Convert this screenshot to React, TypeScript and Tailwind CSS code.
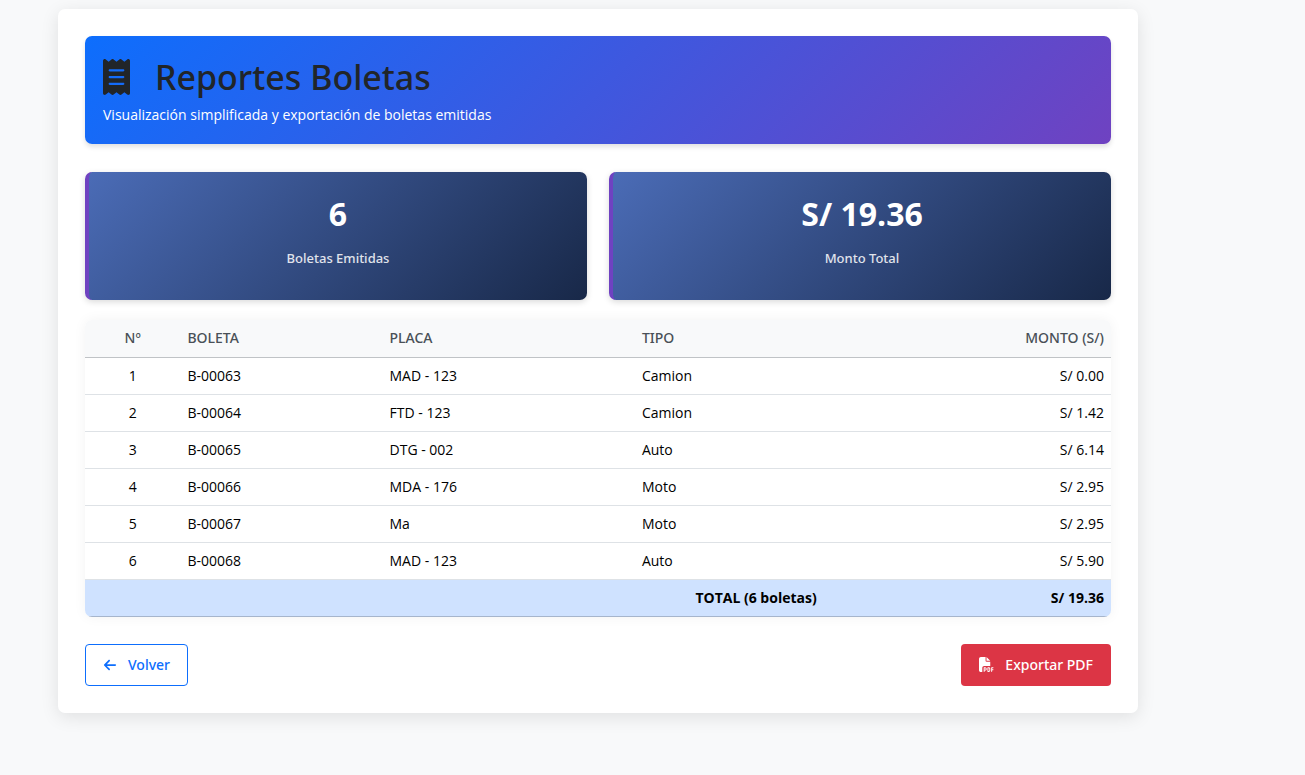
import { FaArrowLeft, FaFilePdf, FaReceipt } from "react-icons/fa6";

type Boleta = { codigo: string; placa: string; tipo: string; monto: number };

const boletas: Boleta[] = [
  { codigo: "B-00063", placa: "MAD - 123", tipo: "Camion", monto: 0 },
  { codigo: "B-00064", placa: "FTD - 123", tipo: "Camion", monto: 1.42 },
  { codigo: "B-00065", placa: "DTG - 002", tipo: "Auto", monto: 6.14 },
  { codigo: "B-00066", placa: "MDA - 176", tipo: "Moto", monto: 2.95 },
  { codigo: "B-00067", placa: "Ma", tipo: "Moto", monto: 2.95 },
  { codigo: "B-00068", placa: "MAD - 123", tipo: "Auto", monto: 5.9 },
];

const soles = (value: number) => `S/ ${value.toFixed(2)}`;
const total = boletas.reduce((sum, b) => sum + b.monto, 0);

function StatCard({ value, label }: { value: string; label: string }) {
  return (
    <div className="flex flex-1 flex-col items-center gap-[15px] rounded-[7px] border-l-4 border-[#6f42c1] bg-[linear-gradient(135deg,#4b6cb7_0%,#182848_100%)] bg-origin-border px-6 pt-[23px] pb-8 text-white shadow-[0_2px_6px_rgba(0,0,0,0.15)]">
      <p className="text-[32px] leading-[38px] font-bold">{value}</p>
      <p className="font-['Noto_Sans',sans-serif] text-[13px] leading-5 font-medium opacity-85">{label}</p>
    </div>
  );
}

export default function App() {
  return (
    <div className="min-h-screen bg-[#f8f9fa] pt-[9px] pb-14 pl-[58px] font-['Open_Sans','Noto_Sans',sans-serif] text-[14px] leading-5 text-black">
      <main className="max-w-[1080px] rounded-[7px] bg-white p-[27px] shadow-[0_4px_18px_rgba(0,0,0,0.1)]">
        <header className="rounded-[7px] bg-[linear-gradient(135deg,#0d6efd_0%,#6f42c1_100%)] px-[18px] pt-[19px] pb-[19px] shadow-[0_3px_5px_rgba(0,0,0,0.12)]">
          <h1 className="flex items-center gap-[25px] font-['Noto_Sans',sans-serif] text-[34px] leading-[44px] font-medium text-[#212529]">
            <FaReceipt className="h-9 w-[27px]" aria-hidden="true" />
            Reportes Boletas
          </h1>
          <p className="pt-1.5 text-white">
            Visualización simplificada y exportación de boletas emitidas
          </p>
        </header>

        <section className="mt-7 flex gap-[22px]">
          <StatCard value={String(boletas.length)} label="Boletas Emitidas" />
          <StatCard value={soles(total)} label="Monto Total" />
        </section>

        <div className="mt-5 overflow-hidden rounded-[7px] shadow-[0_0_13px_rgba(0,0,0,0.05)]">
          <table className="w-full table-fixed border-collapse text-left">
            <colgroup>
              <col className="w-[9.3%]" />
              <col className="w-[19.7%]" />
              <col className="w-[24.6%]" />
              <col className="w-[18.4%]" />
              <col className="w-[28%]" />
            </colgroup>
            <thead className="bg-[#f8f9fa] font-['Noto_Sans',sans-serif] text-[#495057]">
              <tr className="h-[37px] border-b border-[#c0c3c6]">
                <th scope="col" className="px-[7px] text-center font-medium">Nº</th>
                <th scope="col" className="px-[7px] font-medium">BOLETA</th>
                <th scope="col" className="px-[7px] font-medium">PLACA</th>
                <th scope="col" className="px-[7px] font-medium">TIPO</th>
                <th scope="col" className="px-[7px] text-right font-medium">MONTO (S/)</th>
              </tr>
            </thead>
            <tbody>
              {boletas.map((b, i) => (
                <tr key={b.codigo} className="h-[37px] border-b border-[#dee2e6]">
                  <td className="px-[7px] text-center">{i + 1}</td>
                  <td className="px-[7px]">{b.codigo}</td>
                  <td className="px-[7px]">{b.placa}</td>
                  <td className="px-[7px]">{b.tipo}</td>
                  <td className="px-[7px] text-right">{soles(b.monto)}</td>
                </tr>
              ))}
            </tbody>
            <tfoot>
              <tr className="h-[37px] border-b border-[#a6b5cc] bg-[#cfe2ff] text-right font-bold">
                <td colSpan={4} className="px-[7px]">TOTAL ({boletas.length} boletas)</td>
                <td className="px-[7px]">{soles(total)}</td>
              </tr>
            </tfoot>
          </table>
        </div>

        <div className="mt-[27px] flex items-center justify-between font-['Noto_Sans',sans-serif] font-medium">
          <a
            href="#volver"
            className="flex h-[42px] items-center gap-[11px] rounded-[4px] border border-[#0d6efd] px-[17px] text-[#0d6efd]"
          >
            <FaArrowLeft className="size-3.5" aria-hidden="true" />
            Volver
          </a>
          <button
            type="button"
            className="flex h-[42px] items-center gap-[11px] rounded-[4px] bg-[#dc3545] px-[18px] text-white"
          >
            <FaFilePdf className="size-[15px]" aria-hidden="true" />
            Exportar PDF
          </button>
        </div>
      </main>
    </div>
  );
}
